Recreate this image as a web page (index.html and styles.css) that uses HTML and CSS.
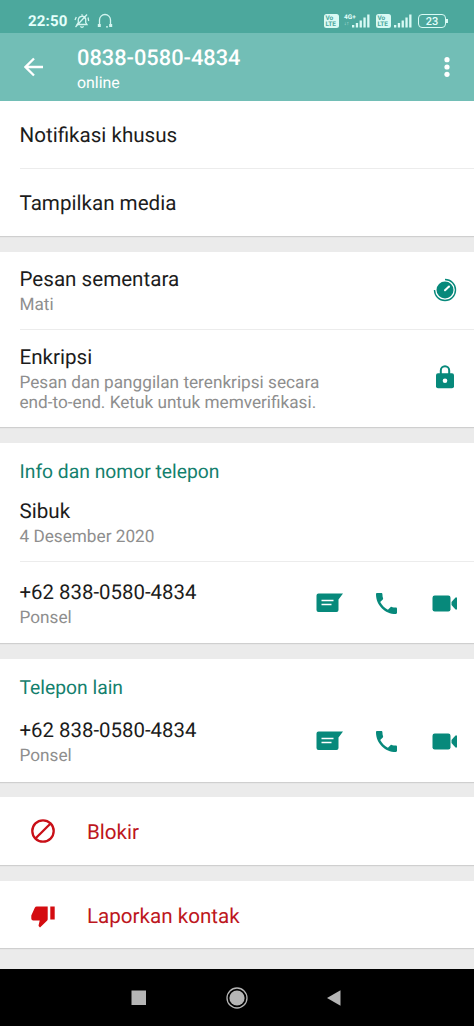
FILE: index.html
```
<!DOCTYPE html>
<html lang="id">
<head>
<meta charset="utf-8">
<title>Info kontak</title>
<link rel="stylesheet" href="styles.css">
</head>
<body>
<svg class="defs" aria-hidden="true">
  <symbol id="chat" viewBox="0 0 28 20"><path d="M2.500.5H27L22.500 6.500V17a2 2 0 0 1-2 2h-18a2 2 0 0 1-2-2V2.500a2 2 0 0 1 2-2Z"/><path class="cut" d="M5.500 7.500H17.500M5.500 11.500H15.500"/></symbol>
  <symbol id="phone" viewBox="3 3 18 18"><path d="M4 3H7.500C8.100 3 8.500 3.400 8.500 4C8.500 5.250 8.700 6.450 9.070 7.570C9.180 7.920 9.100 8.310 8.820 8.590L6.620 10.790C8.060 13.620 10.380 15.930 13.210 17.380L15.410 15.180C15.690 14.900 16.080 14.820 16.430 14.930C17.550 15.300 18.750 15.500 20 15.500C20.600 15.500 21 15.900 21 16.500V20C21 20.600 20.600 21 20 21C10.600 21 3 13.400 3 4C3 3.400 3.400 3 4 3Z"/></symbol>
  <symbol id="video" viewBox="0 0 26 17"><rect x=".5" y=".5" width="18" height="16" rx="2.200"/><path d="M19.500 7 23.500 2.500H25V14.500H23.500L19.500 10Z"/></symbol>
  <symbol id="signal" viewBox="0 0 18 14"><path class="ink" d="M0 11h2.300v2.500H0ZM3.800 9h2.300v4.500H3.800ZM7.600 6.500h2.300v7H7.600ZM11.400 3.500h2.300v10h-2.300ZM15.200.5h2.300v13h-2.300Z"/></symbol>
</svg>

<header class="status">
  <span class="clock">22:50</span>
  <svg class="mute" viewBox="0 0 16 16"><path d="M3 11.500 4.300 9.500V6.500A3.800 3.800 0 0 1 11.700 6V9.500L13 11.500ZM6.500 13.300a1.600 1.600 0 0 0 3 0M8 1.300v1.200M1 7l1.300-3M14.700 8 14 4.500M1.500 14 13 1.500"/></svg>
  <svg class="headset" viewBox="0 0 16 16"><path d="M2.500 11V7a5.500 5.500 0 0 1 11 0v4M9 13.800h2"/><path class="pads" d="M.8 12.500h3M12.200 12.500h3"/></svg>
  <div class="volte"><span>Vo</span><span>LTE</span></div>
  <div class="network"><span>4G+</span><small>↓↑</small></div>
  <svg class="signal"><use href="#signal"/></svg>
  <div class="volte second"><span>Vo</span><span>LTE</span></div>
  <svg class="signal"><use href="#signal"/></svg>
  <div class="battery">23</div>
</header>

<header class="bar">
  <svg class="back" viewBox="0 0 20 20"><path d="M19 10H2M10 1.500 1.500 10 10 18.500"/></svg>
  <div class="contact"><h1>0838-0580-4834</h1><p>online</p></div>
  <svg class="more" viewBox="0 0 6 20"><circle cx="3" cy="2.700" r="2.600"/><circle cx="3" cy="10" r="2.600"/><circle cx="3" cy="17.300" r="2.600"/></svg>
</header>

<main>
  <section class="card">
    <div class="row single"><span class="title">Notifikasi khusus</span></div>
    <div class="row single"><span class="title">Tampilkan media</span></div>
  </section>

  <section class="card">
    <div class="row"><div class="text"><div class="title">Pesan sementara</div><div class="sub">Mati</div></div>
      <svg class="timer" viewBox="0 0 24 24"><circle cx="12" cy="12" r="8.500"/><path class="ring" d="M12 1.500A10.500 10.500 0 1 1 1.500 12"/><path class="hand" d="M12 12.300 16 8.500"/></svg></div>
    <div class="row"><div class="text"><div class="title">Enkripsi</div><div class="sub">Pesan dan panggilan terenkripsi secara<br>end-to-end. Ketuk untuk memverifikasi.</div></div>
      <svg class="lock" viewBox="0 0 18 24"><path class="shackle" d="M4.800 9V5.400a4.200 4.200 0 0 1 8.400 0V9"/><rect y="8.300" width="18" height="15" rx="2"/><circle class="hole" cx="9" cy="15.700" r="2.300"/></svg></div>
  </section>

  <section class="card info">
    <h2>Info dan nomor telepon</h2>
    <div class="row about"><div class="text"><div class="title">Sibuk</div><div class="sub">4 Desember 2020</div></div></div>
    <div class="row number"><div class="text"><div class="title">+62 838-0580-4834</div><div class="sub">Ponsel</div></div>
      <div class="actions"><svg class="chat"><use href="#chat"/></svg><svg class="phone"><use href="#phone"/></svg><svg class="video"><use href="#video"/></svg></div></div>
  </section>

  <section class="card other">
    <h2>Telepon lain</h2>
    <div class="row number"><div class="text"><div class="title">+62 838-0580-4834</div><div class="sub">Ponsel</div></div>
      <div class="actions"><svg class="chat"><use href="#chat"/></svg><svg class="phone"><use href="#phone"/></svg><svg class="video"><use href="#video"/></svg></div></div>
  </section>

  <section class="card danger">
    <svg class="block" viewBox="0 0 24 24"><circle cx="12" cy="12" r="10.700"/><path d="M4.700 19.300 19.300 4.700"/></svg>
    <span class="title">Blokir</span>
  </section>

  <section class="card danger report">
    <svg class="thumb" viewBox="0 0 24 22"><path d="M16.500.5H5.800A2.300 2.300 0 0 0 3.800 1.800L.3 9.500V12.500a2 2 0 0 0 2 2H8.700L7.600 19.200V20L9 21.600 16 14.700A2 2 0 0 0 16.700 13V.5ZM19.300.5H23.700V13.500H19.300Z"/></svg>
    <span class="title">Laporkan kontak</span>
  </section>
</main>

<nav class="nav">
  <svg viewBox="0 0 24 24"><rect x="4.500" y="4.500" width="14.500" height="14.500"/></svg>
  <svg viewBox="0 0 24 24"><circle cx="12" cy="12" r="7.600"/><circle class="outline" cx="12" cy="12" r="10"/></svg>
  <svg viewBox="0 0 24 24"><path d="M4 12 17.500 4.300V19.700Z"/></svg>
</nav>
</body>
</html>
```
FILE: styles.css
```
* { box-sizing: border-box; margin: 0; }
body {
  width: 474px;
  height: 1026px;
  overflow: hidden;
  display: flex;
  flex-direction: column;
  background: #ebebeb;
  color: #1c1c1c;
  font-family: Roboto, "Liberation Sans", sans-serif;
  text-rendering: geometricPrecision;
}
svg { display: block; flex: none; }
.defs { position: absolute; width: 0; height: 0; }

.status {
  height: 33px;
  flex: none;
  display: flex;
  align-items: center;
  padding: 9px 0 0 28px;
  background: #4ca89d;
  color: #e4fffb;
}
.status > * { flex: none; }
.clock { width: 46px; font-size: 15px; font-weight: 700; line-height: 18px; letter-spacing: .2px; }
.mute, .headset { width: 16px; height: 16px; fill: none; stroke: #d3f5f0; stroke-width: 1.300; }
.headset { margin-left: 7px; margin-right: 211px; }
.headset .pads { stroke-width: 3; }
.volte {
  width: 15px;
  height: 14px;
  padding: 1px 1.500px;
  border-radius: 2.500px;
  background: #d9faf5;
  color: #4ca89d;
  font-size: 6.500px;
  font-weight: 700;
  line-height: 6px;
}
.volte span { display: block; }
.volte.second { margin-left: 6px; margin-right: 3px; }
.ink { fill: #d9faf5; }
.network { width: 14px; margin-left: 5px; margin-right: -6px; font-size: 6.500px; font-weight: 700; line-height: 7px; height: 15px; }
.network span, .network small { display: block; }
.network small { font-size: 5px; line-height: 7px; font-weight: 400; opacity: .7; }
.signal { width: 18px; height: 14px; }
.battery {
  position: relative;
  width: 28px;
  height: 14px;
  margin-left: 6px;
  border: 1.500px solid #d9faf5;
  border-radius: 4px;
  font-size: 11px;
  font-weight: 500;
  line-height: 13px;
  text-align: center;
}
.battery::after { content: ""; position: absolute; right: -3px; top: 4px; width: 2px; height: 4px; background: #d9faf5; }

.bar {
  height: 68px;
  flex: none;
  display: flex;
  padding: 0 24px;
  background: #72beb6;
  color: #fff;
}
.back { width: 20px; height: 20px; margin-top: 24px; fill: none; stroke: #fff; stroke-width: 2.300; }
.contact { flex: 1; padding: 13px 0 0 33px; }
h1 { font-size: 21.800px; line-height: 26px; font-weight: 500; }
.contact p { margin-top: 1px; font-size: 15.900px; line-height: 20px; }
.more { width: 6px; height: 20px; margin-top: 24px; fill: #fff; }

main { flex: 1; display: flex; flex-direction: column; gap: 16px; }
.card { flex: none; background: #fff; padding-left: 19.500px; box-shadow: 0 1px 1px #cfcfcf; }
.row { display: flex; padding: 15px 17px 15px 0; }
.row + .row { border-top: 1px solid #ececec; }
.single { height: 67px; align-items: center; }
.row.single + .row.single { height: 68px; }
.text { flex: 1; }
.title { margin-bottom: -2px; font-size: 20.600px; line-height: 26px; }
.number .title { margin-bottom: 0; font-size: 20.400px; line-height: 24px; }
.sub { padding-top: 4px; margin-bottom: -1px; font-size: 17.200px; line-height: 20px; color: #8e8e8e; }
h2 { font-size: 19.300px; line-height: 24px; font-weight: 400; color: #14806d; }

.timer { width: 24px; height: 24px; margin-top: 11px; fill: #07897b; }
.timer .ring { fill: none; stroke: #07897b; stroke-width: 1.400; }
.timer .hand { stroke: #fff; stroke-width: 2; stroke-linecap: round; }
.lock { width: 18px; height: 24px; margin: 20px 3px 0 0; fill: #07897b; }
.lock .shackle { fill: none; stroke: #07897b; stroke-width: 2; }
.lock .hole { fill: #fff; }

.info { padding-top: 17px; }
.info .number { padding: 18px 16px 16px 0; }
.other { padding-top: 17px; margin-bottom: -1px; }
.other .number { padding: 18px 16px 17px 0; }
.info .about { padding-top: 15px; }
.actions { display: flex; align-items: center; height: 24px; margin-top: 11px; fill: #07897b; }
.cut { stroke: #fff; stroke-width: 1.700; fill: none; }
.chat { width: 28px; height: 20px; }
.phone { width: 21px; height: 21px; margin: 1px 0 0 32px; }
.video { width: 26px; height: 17px; margin-left: 35px; }

.danger { display: flex; align-items: center; height: 68px; padding-left: 31px; color: #bd1620; }
.danger .title { margin: 2px 0 -2px 32px; }
.block { width: 24px; height: 24px; fill: none; stroke: #c90f17; stroke-width: 2.300; }
.report { height: 67px; }
.thumb { width: 24px; height: 22px; margin-top: 4px; fill: #d40c10; }

.nav {
  flex: none;
  height: 57px;
  display: flex;
  justify-content: center;
  align-items: center;
  gap: 74px;
  background: #000;
}
.nav svg { width: 24px; height: 24px; fill: #b5b5b5; }
.outline { fill: none; stroke: #b5b5b5; stroke-width: 1.300; }
```
